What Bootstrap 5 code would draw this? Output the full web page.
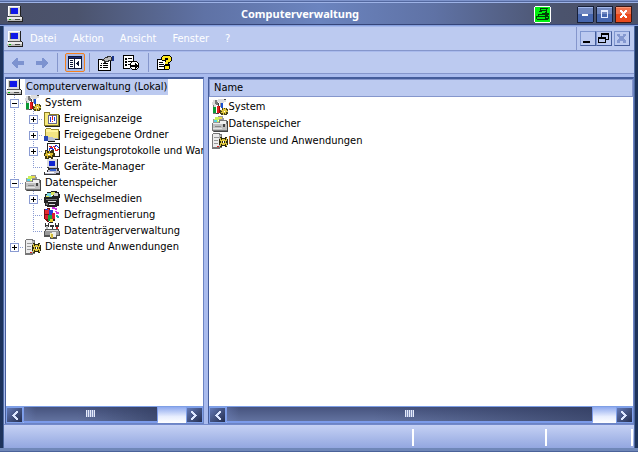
<!DOCTYPE html>
<html lang="de">
<head>
<meta charset="utf-8">
<meta name="viewport" content="width=device-width, initial-scale=1">
<title>Computerverwaltung</title>
<link href="https://cdn.jsdelivr.net/npm/bootstrap@5.3.0/dist/css/bootstrap.min.css" rel="stylesheet">
<style>
:root { --face: #bccaf0; --edge: #8596cc; --deep: #455d9b; }
body { font: 11px/16px "DejaVu Sans Condensed", "DejaVu Sans", sans-serif; color: #000; background: #223760; }
button { font: inherit; padding: 0; border: 0; background: none; color: inherit; }
svg { display: block; flex: none; shape-rendering: crispEdges; }
.ico { width: 16px; height: 16px; }
.frame { background: linear-gradient(90deg, #1d335c 0 3px, #4c679f 3px 4px, transparent 4px calc(100% - 4px), #4c679f calc(100% - 4px) calc(100% - 3px), #1d335c calc(100% - 3px)); padding: 0 4px; }
.titlebar { height: 26px; padding: 3px 6px 0 7px; color: #fff; border-bottom: 1px solid #86a0de;
  background: linear-gradient(#7d93cb 0 1px, #53689f 1px 2px, #9db2e6 2px 3px, transparent 3px 24px, #35457a 24px),
  linear-gradient(90deg, #4a5068, #4b536d 12%, #5f72a5 32%, #6b84bf 50%, #5f72a5 68%, #4b536d 88%, #4a5068); }
.caption { font: bold 11px/20px "Noto Sans", "Open Sans", sans-serif; left: 0; right: 38px; top: 4px; pointer-events: none; }
.cap { width: 17px; height: 17px; }
.caps { gap: 2px; margin-left: 26px; }
.menurow { height: 25px; background: var(--face); border-top: 1px solid #a4b7ea; border-bottom: 1px solid var(--edge); color: #fff; }
.menurow > :first-child { padding-left: 3px; }
.menus { gap: 16px; padding-left: 7px; }
.mdi { border-left: 1px solid var(--edge); padding: 0 4px 0 3px; }
.mdi button { width: 16px; height: 15px; border: 1px solid; border-color: #7f96cf var(--deep) var(--deep) #7f96cf; }
.mdi button:last-child { margin-left: 2px; }
.tools { height: 23px; background: var(--face); border-top: 1px solid #a9baec; border-bottom: 1px solid var(--edge); padding-left: 7px; }
.group { gap: 8px; padding: 0 8px; }
.arrows { gap: 10px; padding-right: 8px; }
.toggle { padding: 0 4px 0 7px; }
.sep { width: 1px; height: 19px; background: var(--edge); }
.tools .pressed { width: 20px; height: 19px; border: 1px solid #f5801e; background: #a9b9e6; border-radius: 2px; }
.panes { background: #a9bbee; padding: 3px 0 0 1px; gap: 4px; }
.pane { background: #fff; border: 1px solid var(--deep); border-top-width: 2px; border-right-color: #6c84c4; border-bottom-color: #6c84c4; min-width: 0; }
.treepane { flex: 0 0 199px; }
.tree { list-style: none; margin: 0; padding: 0; }
.tree ul { list-style: none; margin: 0; padding: 0; }
.item { height: 16px; display: flex; align-items: center; gap: 3px; white-space: nowrap; }
.item .tag { padding: 0 1px; }
.item .picked { background: var(--face); }
.cell { width: 19px; height: 16px; flex: none; margin-right: -3px; display: flex; align-items: center; padding-left: 4px;
  --v: repeating-linear-gradient(#8a9bd2 0 1px, transparent 1px 2px); --h: repeating-linear-gradient(90deg, #8a9bd2 0 1px, transparent 1px 2px);
  background: no-repeat 8px 0 / 1px 16px var(--v); }
.cell.tee { background: no-repeat 8px 0 / 1px 16px var(--v), no-repeat 8px 8px / 10px 1px var(--h); }
.cell.end { background: no-repeat 8px 0 / 1px 8px var(--v), no-repeat 8px 8px / 10px 1px var(--h); }
.knob { width: 9px; height: 9px; border: 1px solid #8a9bd2; background: #fff linear-gradient(#000, #000) no-repeat 1px 3px / 5px 1px; }
.knob.plus { background: linear-gradient(#000, #000) no-repeat 1px 3px / 5px 1px, linear-gradient(#000, #000) no-repeat 3px 1px / 1px 5px, #fff; }
.list { width: 100%; border-collapse: collapse; }
.list th { font-weight: normal; height: 17px; padding: 0 4px; line-height: 14px; background: var(--face); border: 1px solid var(--edge); }
.list td { padding: 0 2px; height: 17px; }
.list td span { padding-left: 1px; }
.list tbody::before { content: ""; display: block; height: 1px; }
.scroller { height: 17px; border-top: 1px solid #7e9fe6; }
.scroller button { width: 17px; height: 16px; border: 1px solid #7fa0ea; background: linear-gradient(135deg, #6278b5, #242e50); flex: none; }
.track { background: linear-gradient(#8ea9ee, #e8eefe 60%, #fff); }
.grip { height: 16px; border: 1px solid #7c9bea; border-width: 0 1px 2px; border-radius: 1px; background: linear-gradient(90deg, #7489c555, transparent 12px), linear-gradient(90deg, #46527c00 40%, #2b355699), linear-gradient(#46537e, #62729f); }
.grip i { width: 9px; height: 7px; background: repeating-linear-gradient(90deg, #e4eafa 0 1px, #8391bb 1px 2px); margin-bottom: 2px; }
.status { height: 24px; background: linear-gradient(#c5d1f4, #93a7e0); border-top: 1px solid #7289cb; padding: 4px 1px 2px 0; }
.status span { border-right: 2px solid; border-image: linear-gradient(90deg, #a9b6dd 50%, #fff 50%) 1; border-width: 0 2px 0 0; }
.s1 { flex: 1; } .s2 { flex: 0 0 133px; } .s3 { flex: 0 0 86px; }
.sill { height: 4px; background: linear-gradient(#6f87b8 3px, #4a6299 3px), #6f87b8; }
</style>
<script src="https://cdn.jsdelivr.net/npm/bootstrap@5.3.0/dist/js/bootstrap.bundle.min.js"></script>
</head>
<body class="vh-100 d-flex flex-column overflow-hidden">
<svg class="d-none">
  <symbol id="pc" viewBox="0 0 16 16"><path fill="#222" d="M1 0h13v10h1v1h1v5H1v-1H0v-4h1z"/><path fill="#d8d8d8" d="M1 0h12v10H1z"/><path fill="#fff" d="M1 0h12v1H2v9H1z"/><path fill="#555" d="M3 2h8v6H3z"/><path fill="#1018e8" d="M4 2h7v6H4z"/><path fill="#555" d="M2 10h12v1H2z"/><path fill="#ececec" d="M0 11h15v2H0z"/><path fill="#bbb" d="M0 13h15v2H0z"/><path fill="#0b0" d="M2 13h2v1H2z"/><path fill="#444" d="M8 13h5v1H8z"/></symbol>
  <symbol id="tools" viewBox="0 0 16 16"><path fill="#777" d="M1 1h4v2h1v3H4v9H1V6H0V3h1z"/><path fill="#ddd" d="M1 1h2v4h1v3H2V6H0V3h1zM6 0h6v1h2v2h-2v1H7V3H5V1h1z"/><path fill="#444" d="M6 4h1v3H6zM12 0h2v1h-2zM4 14h3v1H4z"/><path fill="#9a9a9a" d="M8 4h1v4H8z"/><path fill="#0a9a35" d="M1 8h3v6H1z"/><path fill="#e22020" d="M5 7h3v7H5z"/><path fill="#a00" d="M7 7h1v7H7z"/><path fill="#1850d0" d="M9 4h2v5H9z"/><path fill="#4b4415" d="M10 9h5v1h1v5h-1v1H9v-1H8v-4h2z"/><path fill="#e0c83f" d="M11 9h1v1h1V9h1v2h1v1h1v1h-2v2h-1v-1h-1v2h-1v-2H9v-1h1v-1H9v-1h2z"/><path fill="#fff" d="M12 12h1v1h-1z"/></symbol>
  <symbol id="event" viewBox="0 0 16 16"><path fill="#8b7b25" d="M0 1h6v2h9v12H0z"/><path fill="#f6e97c" d="M1 2h4v2h9v10H1z"/><path fill="#222" d="M15 4h1v12H1v-1h14z"/><path fill="#668" d="M4 4h9v9H4z"/><path fill="#fff" d="M5 5h7v7H5z"/><path fill="#2439dd" d="M6 6h1v5H6zM10 6h1v4h-1z"/><path fill="#d22" d="M8 5h1v4H8zM8 10h1v1H8z"/></symbol>
  <symbol id="share" viewBox="0 0 16 16"><path fill="#9b8b28" d="M1 2h1V1h5v1h8v10H1z"/><path fill="#fff4a0" d="M2 2h5v1h7v7H2z"/><path fill="#f3e583" d="M2 5h12v6H2z"/><path fill="#222" d="M15 4h1v9H7v-1h8z"/><path fill="#2947b5" d="M0 9h4v5H0z"/><path fill="#111" d="M4 14h7v1H4z"/><path fill="#b8bfd0" d="M4 10h5v1h5v1h-3v2H4z"/></symbol>
  <symbol id="perf" viewBox="0 0 16 16"><path fill="#222" d="M3 0h13v14H3z"/><path fill="#fff" d="M4 1h11v12H4z"/><path stroke="#1535dd" fill="none" d="M5 8l2-5 2 5 3-6 3 3"/><path stroke="#e02020" fill="none" d="M5 3l3 2 2-2 2 5 3-2"/><path fill="#3b3510" d="M1 7h3v1h3V7h3v3h1v3h-2v3H7v-1H5v1H1v-3H0v-3h1z"/><path fill="#d9bb2c" d="M2 8h1v2h2V8h1v2h3v2H8v2H7v-1H4v2H3v-2H1v-2h1z"/><path fill="#fff" d="M4 11h2v1H4z"/></symbol>
  <symbol id="device" viewBox="0 0 16 16"><path fill="#333" d="M3 0h11v9h1v3h1v4H0v-3h3v-2h1V9H3z"/><path fill="#ddd" d="M3 0h10v8H3z"/><path fill="#1025d0" d="M5 2h6v5H5z"/><path fill="#bbc" d="M5 8h8v2H6v1H4v2H1v2h11v-1h3v-2h-2V9H5z"/><path fill="#345fcc" d="M6 10h6v2H6z"/><path fill="#fff" d="M1 13h9v1H1z"/></symbol>
  <symbol id="disk" viewBox="0 0 16 16"><path fill="#999" d="M3 1h3V0h5v2h1v5H1V3h2z"/><path fill="#c9f05b" d="M3 1h4v5H2V3h1z"/><path fill="#58d4e4" d="M2 4h3v2H2z"/><path fill="#eed94a" d="M7 1h3v2H7z"/><path fill="#fff" d="M6 4h2v1H6z"/><path fill="#777" d="M0 7h7V4h8v1h1v11H1v-1H0z"/><path fill="#f0f0f0" d="M1 7h7V5h6v3H1z"/><path fill="#c0c0c0" d="M1 8h14v6H1z"/><path fill="#e4e4e4" d="M1 12h9v1H1z"/><path fill="#888" d="M3 10h6v1H3z"/><path fill="#444" d="M15 5h1v11H2v-1h13zM11 8h2v3h-2z"/></symbol>
  <symbol id="media" viewBox="0 0 16 16"><path fill="#222" d="M3 1h4V0h6v1h2v2h1v4h-1v8h-2v1H3v-1H1v-3H0V6h1V3h2z"/><path fill="#79d8e2" d="M3 2h5v4H2V4h1z"/><path fill="#d8e55b" d="M7 1h4v3H7zM2 5h3v1H2z"/><path fill="#ccc" d="M10 2h4v3h-4z"/><path fill="#777" d="M2 8h11v1H2zM2 12h2v2H2z"/><path fill="#ddd" d="M4 10h8v1H4zM5 13h6v1H5z"/><path fill="#fff" d="M7 4h2v1H7z"/></symbol>
  <symbol id="defrag" viewBox="0 0 16 16"><path fill="#711" d="M0 2l5-1 1 1v12l-2 1-4-3z"/><path fill="#e52b32" d="M1 3l4-1v5H1z"/><path fill="#2540d8" d="M5 3h4v6H5zM1 2h3v1H1z"/><path fill="#16a040" d="M4 8h4v6H4z"/><path fill="#d91e2e" d="M8 6h3v6H8zM1 8h3v4H1z"/><path fill="#e6c82c" d="M6 12h3v3H6z"/><path fill="#cb35dd" d="M8 0h3v1h2v2h-2V2H8zM11 4h2v1h2v2h-3V5h-1z"/><path fill="#20aaa2" d="M12 8h2v1h1v2h-2v-1h-1z"/><path fill="#222" d="M9 12h2v2H9v2H5v-1h4z"/></symbol>
  <symbol id="drive" viewBox="0 0 16 16"><path fill="#333" d="M1 0h1v2h2V0h1v4H4v3H2V4H1zM6 2h4v2H9v3H8V4H6zM11 0h1v2h2V0h1v4h-1v3h-2V4h-1z"/><path fill="#bbb" d="M2 3h2v3H2z"/><path fill="#d22" d="M12 4h2v3h-2z"/><path fill="#555" d="M1 6h14v2h1v5h-3v3H6v-2H0V8h1z"/><path fill="#ddd" d="M2 7h12v1H2z"/><path fill="#9a9a9a" d="M1 8h14v4H1z"/><path fill="#f5f0a0" d="M6 10h4v4H6z"/><path fill="#eee" d="M8 9h4v5H9z"/><path fill="#d2b938" d="M7 11h2v4H7z"/></symbol>
  <symbol id="service" viewBox="0 0 16 16"><path fill="#777" d="M1 0h7v1h2v14H8v1H0V1h1z"/><path fill="#ececec" d="M1 1h6v13H1z"/><path fill="#999" d="M2 4h5v1H2zM2 7h4v1H2zM2 10h4v1H2z"/><path fill="#b5b5b5" d="M7 2h2v12H7z"/><path fill="#d22" d="M5 13h2v1H5z"/><path fill="#2e2a0c" d="M8 4h2v1h3V4h2v2h1v6h-1v2h-2v-1h-3v1H8v-2H7V6h1z"/><path fill="#e0c83f" d="M8 5h1v2h1v-1h3v1h1V5h1v3h-1v2h1v3h-1v-2h-1v1h-3v-1H9v2H8v-3h1V8H8z"/><path fill="#2e2a0c" d="M10 8h3v2h-3z"/><path fill="#fff" d="M11 8h1v2h-1z"/></symbol>
</svg>

<header class="titlebar d-flex align-items-center position-relative">
  <svg class="ico"><use href="#pc"/></svg>
  <div class="caption position-absolute text-center">Computerverwaltung</div>
  <div class="ms-auto d-flex align-items-center">
    <button class="cap" aria-label="Drucken"><svg width="17" height="17"><path fill="#fff" d="M1 0h15v1h1v15h-1v1H1v-1H0V1h1z"/><path fill="#00f010" d="M1 1h15v15H1z"/><path fill="#023d08" d="M6 2h8v1h-1v4h2v2h-1v1h1v3h-1v1H3v-1H2v-3h2V8h4V7h3V6H5V5h1z"/><path fill="#00f010" d="M7 3h5v1H7zM8 5h4v1H8zM5 9h6v1H5zM3 11h8v2H3zM12 11h2v1h-2z"/></svg></button>
    <div class="caps d-flex">
      <button class="cap" aria-label="Minimieren"><svg width="17" height="17"><rect width="17" height="17" rx="2" fill="#172039"/><path fill="#a3b9ed" d="M1 1h15v1H1z"/><path fill="#7289c1" d="M1 2h15v6H1z"/><path fill="#4767af" d="M1 8h15v8H1z"/><path fill="#fff" d="M5 8h6v2H5z"/></svg></button>
      <button class="cap" aria-label="Maximieren"><svg width="17" height="17"><rect width="17" height="17" rx="2" fill="#172039"/><path fill="#a3b9ed" d="M1 1h15v1H1z"/><path fill="#7289c1" d="M1 2h15v6H1z"/><path fill="#4767af" d="M1 8h15v8H1z"/><path fill="#e4ecff" fill-rule="evenodd" d="M5 4h7v8H5zM6 6v5h5V6z"/></svg></button>
      <button class="cap" aria-label="Schließen"><svg width="17" height="17"><rect width="17" height="17" rx="2" fill="#3b1715"/><path fill="#f79878" d="M1 1h15v1H1z"/><path fill="#f0724c" d="M1 2h15v6H1z"/><path fill="#e94a1c" d="M1 8h15v8H1z"/><path fill="#fff" d="M5 4h2v1h1v1h1V5h1V4h2v2h-1v1h-1v2h1v1h1v2h-2v-1H9v-1H8v1H7v1H5v-2h1V9h1V7H6V6H5z"/></svg></button>
    </div>
  </div>
</header>

<div class="frame flex-fill d-flex flex-column overflow-hidden">
  <nav class="menurow d-flex">
    <div class="d-flex align-items-center flex-fill">
      <svg class="ico"><use href="#pc"/></svg>
      <div class="menus d-flex"><button>Datei</button><button>Aktion</button><button>Ansicht</button><button>Fenster</button><button>?</button></div>
    </div>
    <div class="mdi d-flex align-items-center">
      <button aria-label="Fenster minimieren"><svg width="14" height="13"><path d="M2 9h7v2H2z"/></svg></button>
      <button aria-label="Fenster wiederherstellen"><svg width="14" height="13"><path d="M4 1h8v7H9v3H1V5h3zM5 3v2h4v2h2V3zM2 7v3h6V7z" fill-rule="evenodd"/></svg></button>
      <button aria-label="Fenster schließen"><svg width="14" height="13"><path fill="#8498d0" d="M2 2h3v2h3V2h3v2h-1v1H9v2h1v1h1v3H8V9H5v2H2V8h1V7h1V5H3V4H2z"/></svg></button>
    </div>
  </nav>
  <div class="tools d-flex align-items-center" role="toolbar">
    <div class="arrows d-flex">
      <button aria-label="Zurück"><svg width="14" height="13"><path fill="#7d93d0" d="M1 6h1V5h1V4h1V3h1V2h2v3h6v4H7v3H5v-1H4v-1H3V9H2V8H1z"/></svg></button>
      <button aria-label="Vorwärts"><svg width="14" height="13"><path fill="#7d93d0" d="M13 6h-1V5h-1V4h-1V3H9V2H7v3H1v4h6v3h2v-1h1v-1h1V9h1V8h1z"/></svg></button>
    </div>
    <div class="sep"></div>
    <div class="toggle"><button class="pressed d-flex align-items-center justify-content-center" aria-label="Struktur ein-/ausblenden"><svg width="14" height="13"><path fill="#101838" d="M0 0h14v13H0z"/><path fill="#1c2c78" d="M1 1h12v1H1z"/><path fill="#fff" d="M1 3h5v9H1zM7 3h6v9H7z"/><path fill="#101838" d="M2 4h3v1H2zM2 6h3v1H2zM2 8h3v1H2zM2 10h3v1H2zM11 4v7l-3-3V7z"/></svg></button></div>
    <div class="sep"></div>
    <div class="group d-flex">
      <button aria-label="Eigenschaften"><svg width="17" height="16"><path d="M0 4h8v1h5v11H0z"/><path fill="#fff" d="M1 5h11v10H1z"/><path d="M3 8h1v1H3zM5 8h5v1H5zM2 10h2v1H2zM5 10h5v1H5zM2 12h2v1H2zM5 12h5v1H5z"/><path fill="#333" d="M4 4h2V3h1V2h2V1h4v1h1v4h-3v1H8v1H6V6H4z"/><path fill="#bbb" d="M6 4h1V3h3V2h3v3h-3v1H7V5H6z"/><path fill="#1a348c" d="M14 1h2v5h-2z"/></svg></button>
      <button aria-label="Liste exportieren"><svg width="17" height="16"><path d="M0 0h11v8h-1V1H1v12h6v1H0z"/><path fill="#fff" d="M1 1h9v12H1z"/><path d="M2 3h2v2H2zM5 3h4v1H5zM2 6h2v2H2zM5 6h4v1H5zM2 9h2v2H2zM5 9h2v1H5z"/><path d="M9 6h5v1h1v1h1v5h-1v1h-1v1H9v-1H8v-1H7V8h1V7h1z"/><path fill="#fff" d="M9 7h5v1h1v5h-1v1H9v-1H8V8h1z"/><path d="M8 10h4V8l3 3-3 3v-2H8z"/></svg></button>
    </div>
    <div class="sep"></div>
    <div class="group d-flex"><button aria-label="Hilfe"><svg width="16" height="16"><path d="M0 4h10v11H0z"/><path fill="#fff" d="M1 5h8v9H1z"/><path d="M2 7h4v1H2zM2 9h5v1H2zM2 11h5v1H2z"/><path d="M6 0h7v1h1v1h1v4h-1v1h-1v1h-1v1h1v5h-1v1H8v-1H7v-4h1V6H5V5H4V2h1V1h1z"/><path fill="#ffe81b" d="M6 1h7v1h1v4h-1v1h-2v2H8V7h1V5h2V3H8v2H5V2h1zM8 11h4v3H8z"/></svg></button></div>
  </div>

  <main class="panes flex-fill d-flex overflow-hidden">
    <section class="pane treepane d-flex flex-column">
      <ul class="tree flex-fill overflow-hidden">
        <li><div class="item"><svg class="ico"><use href="#pc"/></svg><span class="tag picked">Computerverwaltung (Lokal)</span></div>
          <ul>
            <li><div class="item"><span class="cell tee"><button class="knob" aria-label="Reduzieren"></button></span><svg class="ico"><use href="#tools"/></svg><span class="tag">System</span></div>
              <ul>
                <li class="item"><span class="cell"></span><span class="cell tee"><button class="knob plus" aria-label="Erweitern"></button></span><svg class="ico"><use href="#event"/></svg><span class="tag">Ereignisanzeige</span></li>
                <li class="item"><span class="cell"></span><span class="cell tee"><button class="knob plus" aria-label="Erweitern"></button></span><svg class="ico"><use href="#share"/></svg><span class="tag">Freigegebene Ordner</span></li>
                <li class="item"><span class="cell"></span><span class="cell tee"><button class="knob plus" aria-label="Erweitern"></button></span><svg class="ico"><use href="#perf"/></svg><span class="tag">Leistungsprotokolle und Warnungen</span></li>
                <li class="item"><span class="cell"></span><span class="cell end"></span><svg class="ico"><use href="#device"/></svg><span class="tag">Geräte-Manager</span></li>
              </ul></li>
            <li><div class="item"><span class="cell tee"><button class="knob" aria-label="Reduzieren"></button></span><svg class="ico"><use href="#disk"/></svg><span class="tag">Datenspeicher</span></div>
              <ul>
                <li class="item"><span class="cell"></span><span class="cell tee"><button class="knob plus" aria-label="Erweitern"></button></span><svg class="ico"><use href="#media"/></svg><span class="tag">Wechselmedien</span></li>
                <li class="item"><span class="cell"></span><span class="cell tee"></span><svg class="ico"><use href="#defrag"/></svg><span class="tag">Defragmentierung</span></li>
                <li class="item"><span class="cell"></span><span class="cell end"></span><svg class="ico"><use href="#drive"/></svg><span class="tag">Datenträgerverwaltung</span></li>
              </ul></li>
            <li class="item"><span class="cell end"><button class="knob plus" aria-label="Erweitern"></button></span><svg class="ico"><use href="#service"/></svg><span class="tag">Dienste und Anwendungen</span></li>
          </ul></li>
      </ul>
      <div class="scroller d-flex">
        <button aria-label="Nach links"><svg width="15" height="14"><path fill="#dce6ff" d="M9 3h2v2h-1v1H9v1H8v1h1v1h1v1h1v2H9v-1H8v-1H7V9H6V8H5V7h1V6h1V5h1V4h1z"/></svg></button>
        <div class="track flex-fill"><div class="grip d-flex align-items-center justify-content-center" style="width:83%"><i></i></div></div>
        <button aria-label="Nach rechts"><svg width="15" height="14"><path fill="#dce6ff" d="M6 3H4v2h1v1h1v1h1v1H6v1H5v1H4v2h2v-1h1v-1h1V9h1V8h1V7H9V6H8V5H7V4H6z"/></svg></button>
      </div>
    </section>
    <section class="pane flex-fill d-flex flex-column">
      <div class="flex-fill overflow-hidden">
        <table class="list">
          <thead><tr><th scope="col">Name</th></tr></thead>
          <tbody>
            <tr><td><div class="d-flex"><svg class="ico"><use href="#tools"/></svg><span>System</span></div></td></tr>
            <tr><td><div class="d-flex"><svg class="ico"><use href="#disk"/></svg><span>Datenspeicher</span></div></td></tr>
            <tr><td><div class="d-flex"><svg class="ico"><use href="#service"/></svg><span>Dienste und Anwendungen</span></div></td></tr>
          </tbody>
        </table>
      </div>
      <div class="scroller d-flex">
        <button aria-label="Nach links"><svg width="15" height="14"><path fill="#dce6ff" d="M9 3h2v2h-1v1H9v1H8v1h1v1h1v1h1v2H9v-1H8v-1H7V9H6V8H5V7h1V6h1V5h1V4h1z"/></svg></button>
        <div class="track flex-fill"><div class="grip d-flex align-items-center justify-content-center" style="width:94%"><i></i></div></div>
        <button aria-label="Nach rechts"><svg width="15" height="14"><path fill="#dce6ff" d="M6 3H4v2h1v1h1v1h1v1H6v1H5v1H4v2h2v-1h1v-1h1V9h1V8h1V7H9V6H8V5H7V4H6z"/></svg></button>
      </div>
    </section>
  </main>
  <footer class="status d-flex"><span class="s1"></span><span class="s2"></span><span class="s3"></span></footer>
</div>
<div class="sill"></div>
</body>
</html>
